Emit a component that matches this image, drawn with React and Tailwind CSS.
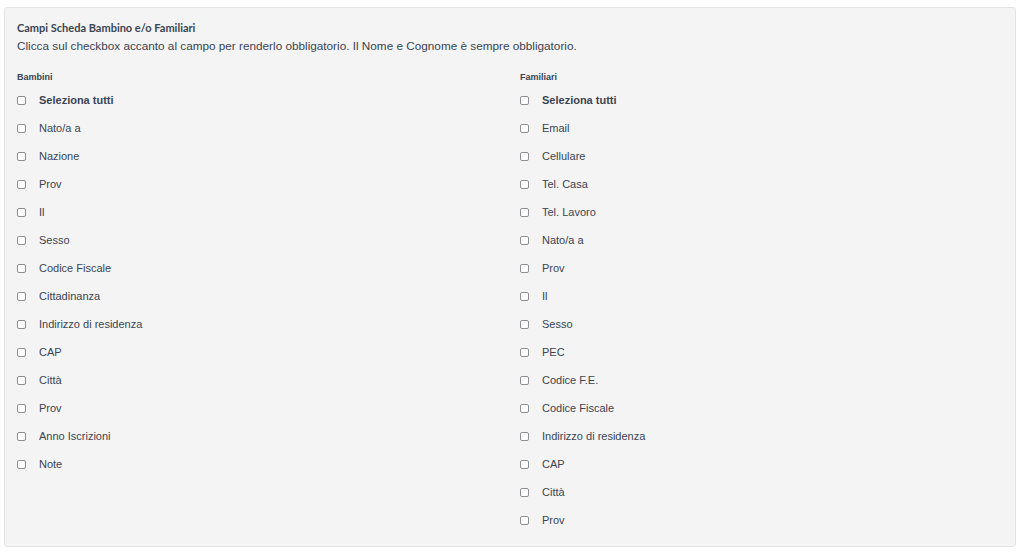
const BAMBINI = [
  'Nato/a a',
  'Nazione',
  'Prov',
  'Il',
  'Sesso',
  'Codice Fiscale',
  'Cittadinanza',
  'Indirizzo di residenza',
  'CAP',
  'Città',
  'Prov',
  'Anno Iscrizioni',
  'Note'
];

const FAMILIARI = [
  'Email',
  'Cellulare',
  'Tel. Casa',
  'Tel. Lavoro',
  'Nato/a a',
  'Prov',
  'Il',
  'Sesso',
  'PEC',
  'Codice F.E.',
  'Codice Fiscale',
  'Indirizzo di residenza',
  'CAP',
  'Città',
  'Prov'
];

const FieldRow = ({ label, bold }) => (
  <label className="flex items-center h-[28px] gap-[13px]">
    <span className="w-[9px] h-[9px] shrink-0 rounded-[2px] border border-[#8e8e93] bg-white" />
    <span className={bold ? 'text-[11px] font-bold text-[#3b4453]' : 'text-[11px] text-[#3b4453]'}>
      {label}
    </span>
  </label>
);

const FieldColumn = ({ title, fields, className }) => (
  <div className={className}>
    {/* Column heading */}
    <div className="text-[9px] leading-[12px] font-bold text-[#3b4453]">{title}</div>
    <div className="mt-[3px] flex flex-col">
      <FieldRow label="Seleziona tutti" bold />
      {fields.map((f, i) => (
        <FieldRow key={i} label={f} />
      ))}
    </div>
  </div>
);

export default function App() {
  return (
    <div className="w-[1024px] h-[554px] bg-white pt-[7px] pl-[4px]" style={{ fontFamily: '"Liberation Sans", Arial, sans-serif' }}>
      <div className="w-[1012px] h-[540px] rounded-[3px] border border-[#e4e4e4] bg-[#f4f4f4] pt-[13px] pl-[12px] pb-[13px]">
        <div className="text-[11px] leading-[14px] font-bold text-[#3b4453]" style={{ fontFamily: 'Lato, sans-serif' }}>
          Campi Scheda Bambino e/o Familiari
        </div>
        <div className="mt-[3px] text-[11.75px] leading-[16px] text-[#3b4453]">
          Clicca sul checkbox accanto al campo per renderlo obbligatorio. Il Nome e Cognome è sempre obbligatorio.
        </div>
        <div className="mt-[17px] flex">
          <FieldColumn title="Bambini" fields={BAMBINI} className="w-[503px]" />
          <FieldColumn title="Familiari" fields={FAMILIARI} className="flex-1" />
        </div>
      </div>
    </div>
  );
}
